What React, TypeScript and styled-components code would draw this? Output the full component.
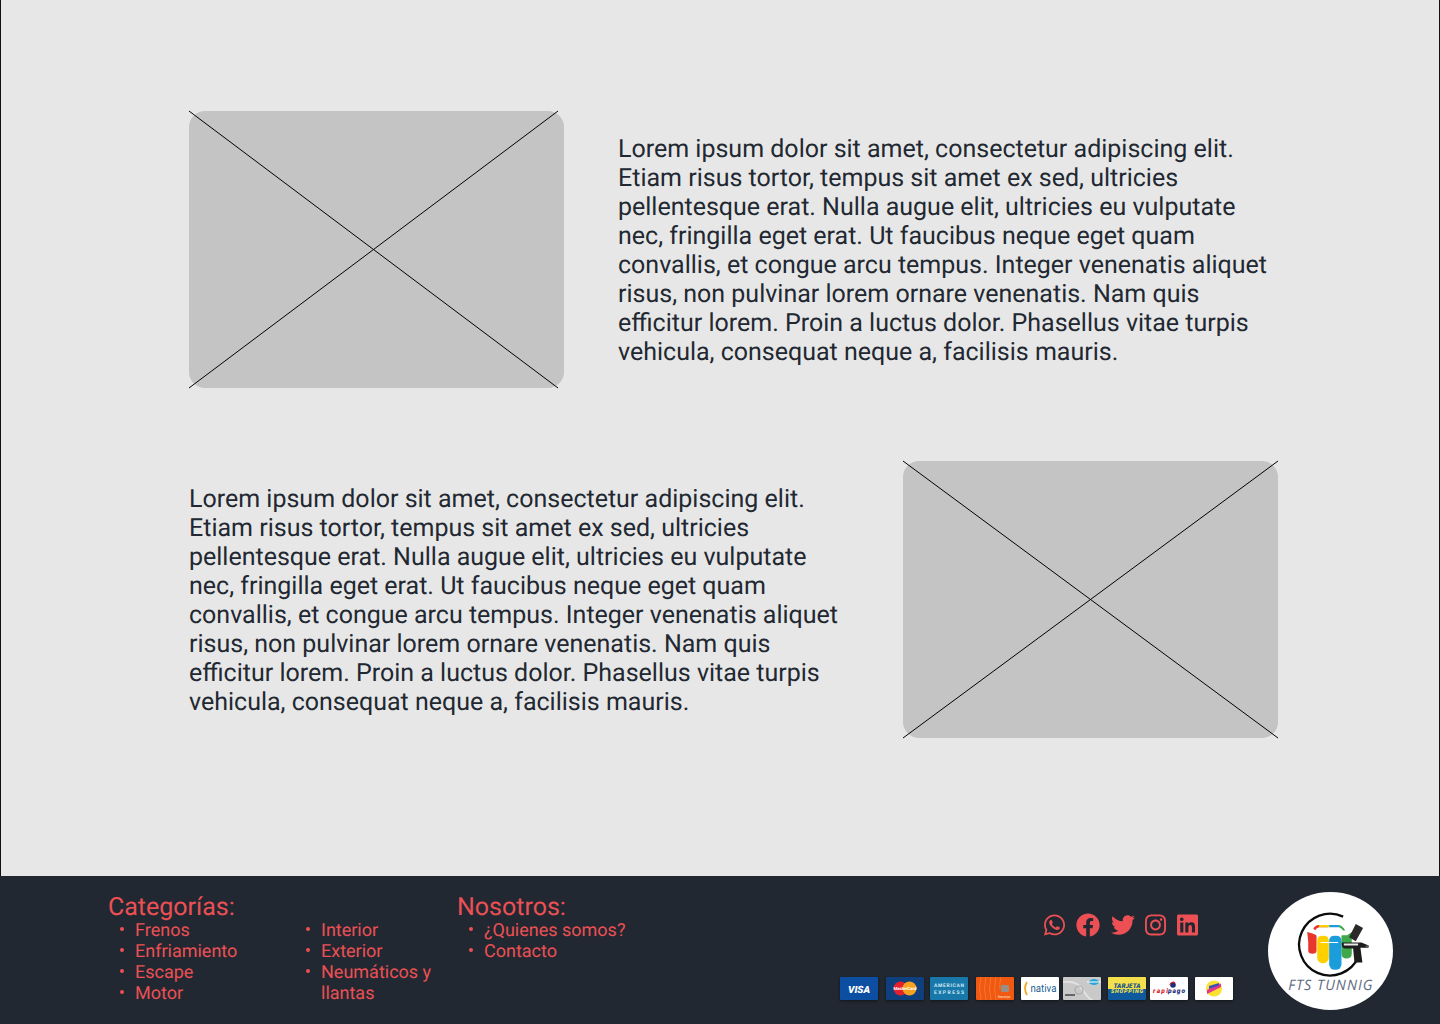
import React from "react";
import styled, { createGlobalStyle } from "styled-components";
import { FaWhatsapp, FaFacebook, FaTwitter, FaInstagram, FaLinkedin } from "react-icons/fa";

const Global = createGlobalStyle`
  html, body { margin: 0; padding: 0; background: #e7e7e7; }
  body { font-family: Roboto, "Liberation Sans", sans-serif; width: 1440px; height: 1024px; overflow: hidden; text-rendering: geometricPrecision; }
`;

const Page = styled.div`
  width: 1440px;
  height: 1024px;
  display: flex;
  flex-direction: column;
`;

const Main = styled.main`
  height: 876px;
  box-sizing: border-box;
  padding: 111px 161px 0 188px;
  background: #e7e7e7;
  border-left: 1px solid #111;
  border-right: 1px solid #111;
  display: flex;
  flex-direction: column;
  gap: 73px;
`;

const Row = styled.section`
  display: flex;
  align-items: center;
  gap: 54px;
  height: 277px;
`;

const Text = styled.p`
  margin: 0;
  padding-top: 2px;
  width: 660px;
  flex: none;
  font-size: 25px;
  line-height: 29px;
  color: #222831;
`;

const ImageBox = styled.div`
  width: 375px;
  height: 277px;
  flex: none;
  background: #c4c4c4;
  border-radius: 16px;
  overflow: visible;
  svg { display: block; overflow: visible; }
`;

const Footer = styled.footer`
  height: 148px;
  background: #222831;
  color: #ec5054;
  display: flex;
  box-sizing: border-box;
  padding-left: 108px;
  position: relative;
`;

const Group = styled.div<{ $w: number }>`
  width: ${(p) => p.$w}px;
  flex: none;
  padding-top: 19px;
`;

const Heading = styled.h3`
  margin: 0;
  font-size: 25px;
  line-height: 25px;
  font-weight: 400;
`;

const Lists = styled.div`
  display: grid;
  grid-template-columns: 186px 136px;
  padding-left: 11px;
`;

const List = styled.ul`
  margin: 0;
  padding: 0;
  list-style: none;
`;

const Item = styled.li`
  display: grid;
  grid-template-columns: 16px 1fr;
  font-size: 18px;
  line-height: 21px;
  &::before {
    content: "";
    width: 4px;
    height: 4px;
    margin: 7px 0 0 1px;
    border-radius: 50%;
    background: currentColor;
  }
`;

const Right = styled.div`
  width: 777px;
  flex: none;
  display: flex;
  flex-direction: column;
  align-items: flex-end;
`;

const Socials = styled.div`
  display: flex;
  gap: 10.75px;
  margin-top: 37px;
  margin-right: 36px;
  svg { display: block; height: 24px; width: 21px; }
  svg:nth-child(2), svg:nth-child(3) { width: 24px; }
`;

const Cards = styled.div`
  display: flex;
  margin-top: 40px;
  margin-right: 1px;
`;

const Card = styled.div<{ $ml: number; $bg: string }>`
  width: 38px;
  height: 23px;
  flex: none;
  margin-left: ${(p) => p.$ml}px;
  background: ${(p) => p.$bg};
  box-shadow: 0 1px 3px rgba(0, 0, 0, 0.5);
  border-radius: 1px;
  overflow: hidden;
  svg { display: block; width: 38px; height: 23px; }
`;

const LogoWrap = styled.div`
  width: 125px;
  height: 118px;
  flex: none;
  margin: 16px 0 0 34px;
  border-radius: 50%;
  background: #fff;
  overflow: hidden;
  svg { display: block; }
`;

const lorem =
  "Lorem ipsum dolor sit amet, consectetur adipiscing elit. Etiam risus tortor, tempus sit amet ex sed, ultricies pellentesque erat. Nulla augue elit, ultricies eu vulputate nec, fringilla eget erat. Ut faucibus neque eget quam convallis, et congue arcu tempus. Integer venenatis aliquet risus, non pulvinar lorem ornare venenatis. Nam quis efficitur lorem. Proin a luctus dolor. Phasellus vitae turpis vehicula, consequat neque a, facilisis mauris.";

const Placeholder = ({ w }: { w: number }) => (
  <ImageBox>
    <svg width="375" height="277" viewBox="0 0 375 277">
      <path d={`M0 0L${w} 277M${w} 0L0 277`} stroke="#000" strokeWidth="1" fill="none" />
    </svg>
  </ImageBox>
);

const Tiny = styled.text`
  font-family: Roboto, "Liberation Sans", sans-serif;
`;

const Logo = () => (
  <LogoWrap>
    <svg width="125" height="118" viewBox="24 20 376 355">
      <path d="M250 94A93 93 0 1 0 296 215" fill="none" stroke="#0c0c0c" strokeWidth="7" />
      <path d="M160 130Q165 120 178 119H205V126H178Q170 127 166 135Z" fill="#e8362c" />
      <path d="M178 119H208V126H178Z" fill="#ffd000" />
      <path d="M208 119H238V126H208Z" fill="#1b9ddb" />
      <path d="M238 119Q250 122 256 136L250 136Q245 128 238 126Z" fill="#3ea84a" />
      <path d="M142 140L158 145L170 150V196Q170 206 158 206Q145 206 145 196V170Z" fill="#e8362c" />
      <rect x="172" y="150" width="35" height="84" rx="16" fill="#ffd000" />
      <rect x="208" y="150" width="37" height="104" rx="17" fill="#1b9ddb" />
      <path d="M245 150H262L276 140V205Q276 220 260 220Q245 220 245 205Z" fill="#3ea84a" />
      <path d="M170 150H245" stroke="#fff" strokeWidth="3" />
      <path d="M182 172H235" stroke="#fff" strokeWidth="3" />
      <path d="M288 116L310 128L288 168L268 156Z" fill="#2a2a2a" />
      <path d="M246 172H305L325 180V188H302L308 232H284L280 190H255Q246 188 246 178Z" fill="#1d1d1d" />
      <path d="M252 175H295V181H252Z" fill="#e8e8e8" />
      <rect x="318" y="181" width="10" height="6" fill="#666" />
      <text x="213" y="316" textAnchor="middle" fontFamily="'Open Sans', sans-serif" fontStyle="italic" fontSize="43" letterSpacing="3" fill="#5f6c85">FTS TUNNIG</text>
    </svg>
  </LogoWrap>
);

const PayCards = () => (
  <Cards>
    <Card $ml={0} $bg="#0b4ea2">
      <svg viewBox="0 0 38 23"><Tiny x="19" y="15.5" textAnchor="middle" fontSize="10" fontWeight="900" fontStyle="italic" fill="#fff">VISA</Tiny></svg>
    </Card>
    <Card $ml={8} $bg="#0f3f7c">
      <svg viewBox="0 0 38 23">
        <circle cx="14.5" cy="11.5" r="7" fill="#e3202c" />
        <circle cx="23.5" cy="11.5" r="7" fill="#f6a21e" />
        <Tiny x="19" y="13" textAnchor="middle" fontSize="4.4" fontWeight="700" fill="#fff">MasterCard</Tiny>
      </svg>
    </Card>
    <Card $ml={6} $bg="#1878a9">
      <svg viewBox="0 0 38 23">
        <Tiny x="19" y="9.5" textAnchor="middle" fontSize="5" fontWeight="700" fill="#cfe9f5" textLength="30">AMERICAN</Tiny>
        <Tiny x="19" y="17" textAnchor="middle" fontSize="5" fontWeight="700" fill="#cfe9f5" textLength="30">EXPRESS</Tiny>
      </svg>
    </Card>
    <Card $ml={8} $bg="#f0590f">
      <svg viewBox="0 0 38 23">
        <path d="M5 0Q2 12 5 23M10 0Q7 12 10 23M15 0Q12 12 15 23M20 0Q17 12 20 23M25 0Q23 8 24 12" stroke="#f78a4e" strokeWidth="0.6" fill="none" />
        <rect x="25" y="8" width="8" height="7" rx="1" fill="#9a8f86" />
        <Tiny x="28" y="21" textAnchor="middle" fontSize="3.6" fill="#ffe1cc">Naranja</Tiny>
      </svg>
    </Card>
    <Card $ml={7} $bg="#fff">
      <svg viewBox="0 0 38 23">
        <path d="M6 5Q2 11 6 18" stroke="#f5a623" strokeWidth="1.8" fill="none" />
        <Tiny x="9.5" y="15" fontSize="11" textLength="26" lengthAdjust="spacingAndGlyphs" fill="#1c5f94">nativa</Tiny>
      </svg>
    </Card>
    <Card $ml={4} $bg="#c9c9c9">
      <svg viewBox="0 0 38 23">
        <path d="M0 5Q14 3 20 13T30 23" stroke="#e2e2e2" strokeWidth="2" fill="none" />
        <circle cx="16" cy="13" r="4" stroke="#aaa" strokeWidth="1.2" fill="none" />
        <ellipse cx="31" cy="5" rx="5" ry="3" fill="#2aa6d6" />
        <rect x="24" y="4.5" width="14" height="1" fill="#fff" />
        <rect x="2" y="17" width="10" height="2" fill="#666" />
      </svg>
    </Card>
    <Card $ml={7} $bg="#0f5a9c">
      <svg viewBox="0 0 38 23">
        <rect width="38" height="12" fill="#f4e04d" />
        <Tiny x="19" y="10.5" textAnchor="middle" fontSize="6.4" fontWeight="900" fontStyle="italic" fill="#0f4f8c" textLength="27">TARJETA</Tiny>
        <Tiny x="19" y="16" textAnchor="middle" fontSize="5.4" fontWeight="900" fontStyle="italic" fill="#f4e04d" textLength="32">SHOPPING</Tiny>
      </svg>
    </Card>
    <Card $ml={4} $bg="#fff">
      <svg viewBox="0 0 38 23">
        <circle cx="23" cy="8" r="2.8" fill="#1c2f7c" />
        <path d="M20 8a3 3 0 0 1 5-2" stroke="#d81e2c" strokeWidth="1.2" fill="none" />
        <Tiny x="3" y="16" fontSize="6.6" fontWeight="900" fontStyle="italic" fill="#d81e2c" textLength="15">rapi</Tiny>
        <Tiny x="18" y="16" fontSize="6.6" fontWeight="900" fontStyle="italic" fill="#1c2f7c" textLength="17">pago</Tiny>
      </svg>
    </Card>
    <Card $ml={7} $bg="#fff">
      <svg viewBox="0 0 38 23">
        <circle cx="19" cy="11.5" r="8" fill="#fbe232" />
        <path d="M12 13L26 6.5V10L12 17Z" fill="#e6328f" />
        <path d="M14 9L24 6V8.5L14 12Z" fill="#3a4fb5" />
      </svg>
    </Card>
  </Cards>
);

export default function App() {
  return (
    <Page>
      <Global />
      <Main>
        <Row>
          <Placeholder w={369} />
          <Text>{lorem}</Text>
        </Row>
        <Row>
          <Text>{lorem}</Text>
          <Placeholder w={375} />
        </Row>
      </Main>
      <Footer>
        <Group $w={349}>
          <Heading>Categorías:</Heading>
          <Lists>
            <List>
              <Item>Frenos</Item>
              <Item>Enfriamiento</Item>
              <Item>Escape</Item>
              <Item>Motor</Item>
            </List>
            <List>
              <Item>Interior</Item>
              <Item>Exterior</Item>
              <Item>Neumáticos y llantas</Item>
            </List>
          </Lists>
        </Group>
        <Group $w={0}>
          <Heading>Nosotros:</Heading>
          <Lists>
            <List>
              <Item>¿Quienes somos?</Item>
              <Item>Contacto</Item>
            </List>
          </Lists>
        </Group>
        <Right>
          <Socials>
            <FaWhatsapp />
            <FaFacebook />
            <FaTwitter />
            <FaInstagram />
            <FaLinkedin />
          </Socials>
          <PayCards />
        </Right>
        <Logo />
      </Footer>
    </Page>
  );
}
